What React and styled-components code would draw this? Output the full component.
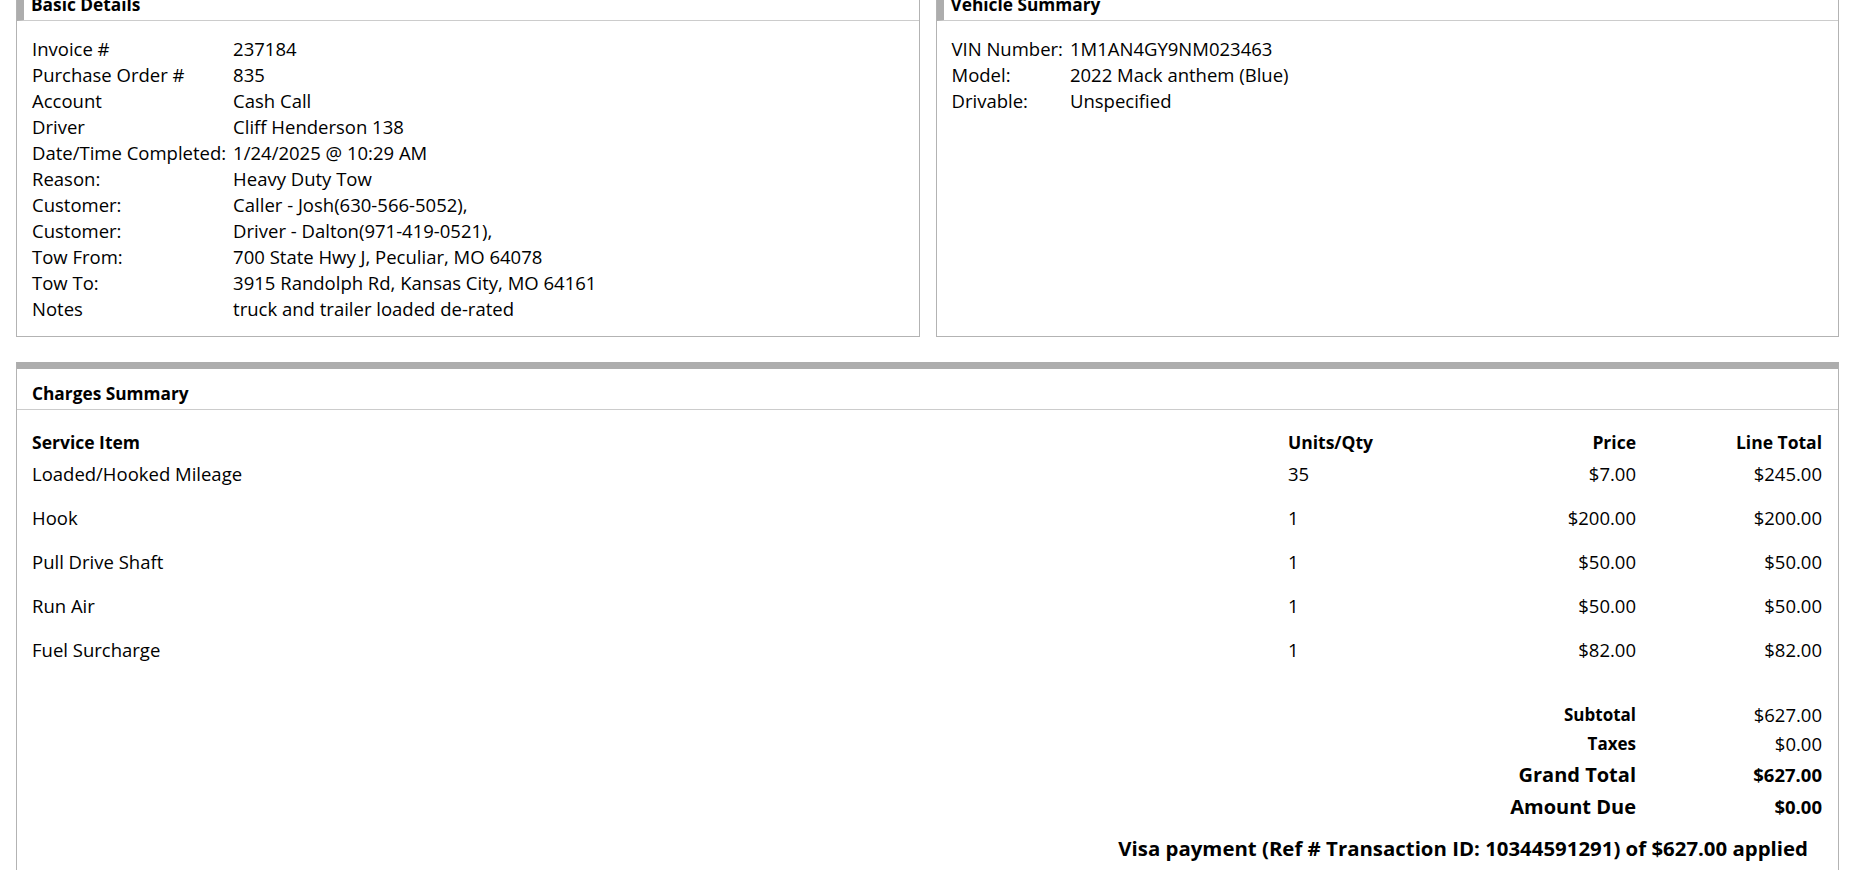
import styled, { createGlobalStyle } from "styled-components";

const GlobalStyle = createGlobalStyle`
  html, body {
    margin: 0;
    padding: 0;
    background: #fff;
    overflow: hidden;
  }
  body {
    font-family: "Open Sans", "Noto Sans", sans-serif;
    color: #000;
  }
`;

const basicDetails = [
    ["Invoice #", "237184"],
    ["Purchase Order #", "835"],
    ["Account", "Cash Call"],
    ["Driver", "Cliff Henderson 138"],
    ["Date/Time Completed:", "1/24/2025 @ 10:29 AM"],
    ["Reason:", "Heavy Duty Tow"],
    ["Customer:", "Caller - Josh(630-566-5052),"],
    ["Customer:", "Driver - Dalton(971-419-0521),"],
    ["Tow From:", "700 State Hwy J, Peculiar, MO 64078"],
    ["Tow To:", "3915 Randolph Rd, Kansas City, MO 64161"],
    ["Notes", "truck and trailer loaded de-rated"],
];

const vehicle = [
    ["VIN Number:", "1M1AN4GY9NM023463"],
    ["Model:", "2022 Mack anthem (Blue)"],
    ["Drivable:", "Unspecified"],
];

const charges = [
    ["Loaded/Hooked Mileage", "35", "$7.00", "$245.00"],
    ["Hook", "1", "$200.00", "$200.00"],
    ["Pull Drive Shaft", "1", "$50.00", "$50.00"],
    ["Run Air", "1", "$50.00", "$50.00"],
    ["Fuel Surcharge", "1", "$82.00", "$82.00"],
];

const totals = [
    { label: "Subtotal", value: "$627.00", big: false },
    { label: "Taxes", value: "$0.00", big: false },
    { label: "Grand Total", value: "$627.00", big: true },
    { label: "Amount Due", value: "$0.00", big: true },
];

function App() {
    return (
        <>
            <GlobalStyle />
            <Page>
                <TopRow>
                    <Panel>
                        <PanelHeader $accent>Basic Details</PanelHeader>
                        <DetailList>
                            {basicDetails.map(([k, v], i) => (
                                <DetailPair key={i}>
                                    <span>{k}</span>
                                    <span>{v}</span>
                                </DetailPair>
                            ))}
                        </DetailList>
                    </Panel>
                    <Panel>
                        <PanelHeader $accent>Vehicle Summary</PanelHeader>
                        <DetailList>
                            {vehicle.map(([k, v], i) => (
                                <DetailPair key={i}>
                                    <span>{k}</span>
                                    <span>{v}</span>
                                </DetailPair>
                            ))}
                        </DetailList>
                    </Panel>
                </TopRow>

                <Panel $topBar>
                    <PanelHeader>Charges Summary</PanelHeader>
                    <ChargesBody>
                        <ChargeRow $head>
                            <Cell>Service Item</Cell>
                            <Cell>Units/Qty</Cell>
                            <Cell $right>Price</Cell>
                            <Cell $right>Line Total</Cell>
                        </ChargeRow>
                        {charges.map((row, i) => (
                            <ChargeRow key={i}>
                                <Cell>{row[0]}</Cell>
                                <Cell>{row[1]}</Cell>
                                <Cell $right>{row[2]}</Cell>
                                <Cell $right>{row[3]}</Cell>
                            </ChargeRow>
                        ))}
                        <Totals>
                            {totals.map((t) => (
                                <TotalRow key={t.label} $big={t.big}>
                                    <TotalLabel $big={t.big}>{t.label}</TotalLabel>
                                    <TotalValue $big={t.big}>{t.value}</TotalValue>
                                </TotalRow>
                            ))}
                        </Totals>
                        <PaymentNote>
                            Visa payment (Ref # Transaction ID: 10344591291) of $627.00 applied
                        </PaymentNote>
                    </ChargesBody>
                </Panel>
            </Page>
        </>
    );
}

export default App


const Page = styled.div`
    padding: 0 30px 0 16px;
    display: flex;
    flex-direction: column;
    gap: 25px;
`;

const TopRow = styled.div`
    display: grid;
    grid-template-columns: 1fr 1fr;
    column-gap: 16px;
    margin-top: -21px;
`;

const Panel = styled.section`
    border: 1px solid #b3b3b3;
    border-top: ${(p) => (p.$topBar ? "7px solid #adadad" : "1px solid #b3b3b3")};
    background: #fff;
    min-height: ${(p) => (p.$topBar ? "600px" : "0")};
`;

const PanelHeader = styled.div`
    height: 41px;
    box-sizing: border-box;
    display: flex;
    align-items: flex-end;
    padding-bottom: 5px;
    line-height: 20px;
    border-bottom: 1px solid #cccccc;
    border-left: ${(p) => (p.$accent ? "7px solid #adadad" : "none")};
    padding-left: ${(p) => (p.$accent ? "7px" : "15px")};
    font-size: 17.3px;
    font-weight: 700;
`;

const DetailList = styled.div`
    display: grid;
    grid-template-columns: max-content 1fr;
    column-gap: 7px;
    padding: 15px 15px 14px 15px;
    font-size: 18.5px;
    line-height: 26px;
`;

const DetailPair = styled.div`
    display: contents;
`;

const ChargesBody = styled.div`
    padding: 19px 16px 0 15px;
    font-size: 18.5px;
`;

const ChargeRow = styled.div`
    display: grid;
    grid-template-columns: 1fr 200px 148px 186px;
    line-height: 26px;
    font-weight: ${(p) => (p.$head ? 700 : 400)};
    font-size: ${(p) => (p.$head ? "17.5px" : "18.5px")};
    padding-bottom: ${(p) => (p.$head ? "6px" : "18px")};
`;

const Cell = styled.div`
    text-align: ${(p) => (p.$right ? "right" : "left")};
    white-space: nowrap;
`;

const Totals = styled.div`
    margin-top: 19px;
    display: flex;
    flex-direction: column;
`;

const TotalRow = styled.div`
    display: flex;
    justify-content: flex-end;
    align-items: center;
    height: ${(p) => (p.$big ? "32px" : "29px")};
`;

const TotalLabel = styled.div`
    font-weight: 700;
    font-size: ${(p) => (p.$big ? "20px" : "17px")};
    text-align: right;
`;

const TotalValue = styled.div`
    width: 186px;
    text-align: right;
    font-weight: ${(p) => (p.$big ? 700 : 400)};
    font-size: 18.5px;
`;

const PaymentNote = styled.div`
    margin-top: 11px;
    padding-right: 14px;
    text-align: right;
    font-weight: 700;
    font-size: 20.4px;
    line-height: 30px;
`;
